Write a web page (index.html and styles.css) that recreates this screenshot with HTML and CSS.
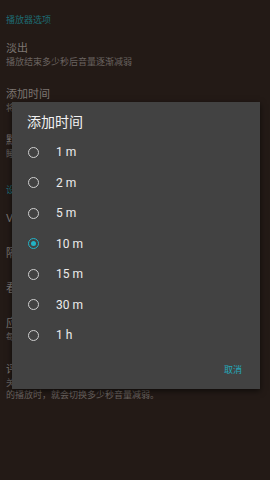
FILE: index.html
```html
<!DOCTYPE html>
<html>
<head>
<meta charset="utf-8">
<link rel="stylesheet" href="styles.css">
</head>
<body>
<div class="screen">
  <div class="list">
    <div class="cat first">播放器选项</div>
    <div class="item two"><div class="t">淡出</div><div class="s">播放结束多少秒后音量逐渐减弱</div></div>
    <div class="item two"><div class="t">添加时间</div><div class="s">将时间添加到睡眠定时器</div></div>
    <div class="item two"><div class="t">默认时间</div><div class="s">睡眠定时器的默认时间</div></div>
    <div class="cat second">设置</div>
    <div class="item one"><div class="t">V</div></div>
    <div class="item one"><div class="t">隔</div></div>
    <div class="item one"><div class="t">看</div></div>
    <div class="item two"><div class="t">应用</div><div class="s">每</div></div>
    <div class="item three"><div class="t">评价</div><div class="s">关</div><div class="s">的播放时，就会切换多少秒音量减弱。</div></div>
  </div>

  <div class="dialog">
    <div class="title">添加时间</div>
    <div class="options">
      <div class="opt"><span class="radio"></span><span class="lbl">1 m</span></div>
      <div class="opt"><span class="radio"></span><span class="lbl">2 m</span></div>
      <div class="opt"><span class="radio"></span><span class="lbl">5 m</span></div>
      <div class="opt"><span class="radio on"></span><span class="lbl">10 m</span></div>
      <div class="opt"><span class="radio"></span><span class="lbl">15 m</span></div>
      <div class="opt"><span class="radio"></span><span class="lbl">30 m</span></div>
      <div class="opt"><span class="radio"></span><span class="lbl">1 h</span></div>
    </div>
    <div class="actions"><span class="btn">取消</span></div>
  </div>
</div>
</body>
</html>
```
FILE: styles.css
```css
html, body {
  margin: 0;
  padding: 0;
  background: #231a16;
}
body {
  font-family: Roboto, "Noto Sans CJK SC", sans-serif;
  width: 270px;
  height: 480px;
  overflow: hidden;
}
.screen {
  position: relative;
  width: 270px;
  height: 480px;
  background: #231a16;
}
.list {
  display: flex;
  flex-direction: column;
  padding-left: 6px;
}
.cat {
  color: #1d6b72;
  font-size: 9px;
  height: 14px;
  line-height: 14px;
}
.cat.first {
  margin-top: 13px;
  margin-bottom: 15px;
}
.cat.second {
  margin-top: 3px;
  margin-bottom: 15px;
}
.item {
  display: flex;
  flex-direction: column;
  justify-content: flex-start;
}
.item .t {
  color: #7d7672;
  font-size: 11px;
  line-height: 14px;
}
.item .s {
  color: #6a6360;
  font-size: 9px;
  line-height: 12px;
}
.item.two { height: 46px; }
.item.one { height: 35px; }
.item.three { height: 60px; }

.dialog {
  position: absolute;
  left: 12px;
  top: 102px;
  width: 248px;
  height: 287px;
  background: #424242;
  box-shadow: 0 2px 6px rgba(0,0,0,0.6);
  display: flex;
  flex-direction: column;
}
.title {
  color: #f2f2f2;
  font-size: 14px;
  line-height: 20px;
  padding: 9px 0 0 15px;
  font-family: "Noto Sans CJK SC", sans-serif;
}
.options {
  display: flex;
  flex-direction: column;
  margin-top: 6px;
}
.opt {
  display: flex;
  align-items: center;
  height: 30.5px;
  padding-left: 16px;
}
.radio {
  width: 9px;
  height: 9px;
  border: 1.5px solid #cfcfcf;
  border-radius: 50%;
  box-sizing: content-box;
  position: relative;
}
.radio.on {
  border-color: #22b3c6;
}
.radio.on::after {
  content: "";
  position: absolute;
  left: 2px;
  top: 2px;
  width: 5px;
  height: 5px;
  border-radius: 50%;
  background: #22b3c6;
}
.lbl {
  color: #ececec;
  font-size: 12px;
  margin-left: 17px;
}
.actions {
  display: flex;
  justify-content: flex-end;
  margin-top: auto;
  padding: 0 18px 12px 0;
}
.btn {
  color: #22a9bb;
  font-size: 9px;
  line-height: 14px;
  font-family: "Noto Sans CJK SC", sans-serif;
}
```
